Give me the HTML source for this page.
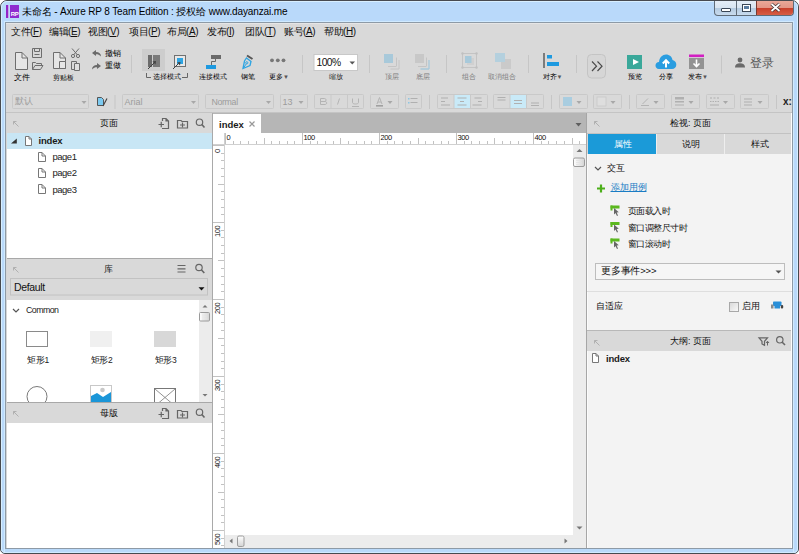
<!DOCTYPE html>
<html><head><meta charset="utf-8">
<style>
*{margin:0;padding:0;box-sizing:border-box}
html,body{width:799px;height:554px;overflow:hidden;background:#fff;font-family:"Liberation Sans",sans-serif;color:#222}
.a{position:absolute}
.t{position:absolute;white-space:nowrap;line-height:1}
svg{position:absolute;left:0;top:0;overflow:visible}
.mn{font-size:10px;top:27px;color:#111;letter-spacing:-0.45px}
.u{text-decoration:underline}
</style></head><body>
<!-- window frame -->
<div class="a" style="left:0;top:0;width:799px;height:554px;background:#b9d9fa;border:1px solid #474a4f;border-radius:7px 7px 5px 5px"></div>
<div class="a" style="left:1px;top:1px;width:797px;height:552px;border:1px solid #d8efff;border-radius:6px 6px 4px 4px"></div>
<div class="a" style="left:4px;top:21px;width:790px;height:532px;border:1px solid #d0eaff"></div>
<div class="a" style="left:5px;top:22px;width:788px;height:527px;background:#d9d9d9;border:1px solid #8d9aa6"></div>

<!-- title bar -->
<div class="a" style="left:6px;top:5px;width:2px;height:13px;background:#9424c8"></div>
<div class="a" style="left:8px;top:5px;width:1px;height:13px;background:#c9a6e6"></div>
<div class="a" style="left:10px;top:5px;width:9px;height:13px;background:#8f2bcf"></div>
<div class="t" style="left:10px;top:11px;width:9px;text-align:center;font-size:6px;font-weight:bold;color:#fff;letter-spacing:-0.5px">RP</div>
<div class="t" style="left:22px;top:6.5px;font-size:10px;color:#000;letter-spacing:-0.13px">未命名 - Axure RP 8 Team Edition : 授权给 www.dayanzai.me</div>
<!-- caption buttons -->
<div class="a" style="left:714px;top:1px;width:80px;height:15px;border:1px solid #5f6b78;border-top:none;border-radius:0 0 4px 4px;overflow:hidden;background:linear-gradient(#e4edf7 0,#d8e4f0 50%,#b4cae0 50%,#c8dbee 100%)">
  <div class="a" style="left:21px;top:0;width:1px;height:15px;background:#5f6b78"></div>
  <div class="a" style="left:41px;top:0;width:38px;height:15px;background:linear-gradient(#eaa898 0,#e29484 50%,#c9412c 50%,#d8624a 100%);border-left:1px solid #7a3a30"></div>
</div>
<div class="a" style="left:721px;top:8px;width:10px;height:4px;background:#fff;border:1px solid #3a4656;border-radius:1px"></div>
<div class="a" style="left:742px;top:4px;width:9px;height:8px;background:#fff;border:1px solid #3a4656"></div>
<div class="a" style="left:744px;top:6px;width:5px;height:3px;background:#5a7ca0"></div>
<svg width="799" height="20"><path d="M771.5 4L779.5 11M779.5 4L771.5 11" stroke="#3a3030" stroke-width="3.2"/><path d="M771.5 4L779.5 11M779.5 4L771.5 11" stroke="#fff" stroke-width="1.8"/></svg>

<!-- menu -->
<div class="a" style="left:6px;top:23px;width:786px;height:1px;background:#e6e6e6"></div>
<div class="t mn" style="left:11px">文件(<span class="u">F</span>)</div>
<div class="t mn" style="left:49px">编辑(<span class="u">E</span>)</div>
<div class="t mn" style="left:88px">视图(<span class="u">V</span>)</div>
<div class="t mn" style="left:129px">项目(<span class="u">P</span>)</div>
<div class="t mn" style="left:167px">布局(<span class="u">A</span>)</div>
<div class="t mn" style="left:207px">发布(<span class="u">I</span>)</div>
<div class="t mn" style="left:245px">团队(<span class="u">T</span>)</div>
<div class="t mn" style="left:284px">账号(<span class="u">A</span>)</div>
<div class="t mn" style="left:324px">帮助(<span class="u">H</span>)</div>


<!-- TOOLBAR -->
<svg width="799" height="90" style="top:0">
 <g fill="none" stroke="#6e6e6e" stroke-width="1">
  <!-- new file -->
  <path d="M15.5 52.5H22L27.5 58V69.5H15.5Z" fill="#e6e6e6"/>
  <path d="M22 52.5V58H27.5"/>
  <!-- save -->
  <path d="M32.5 48.5H41.5V57.5H32.5Z"/><path d="M34.5 48.5V51.5H39.5V48.5M34.5 54.5H39.5"/>
  <!-- open -->
  <path d="M32.5 69.5V62.5H35.5L36.5 63.5H41.5V65.5M32.5 69.5L35 65.5H43L40.5 69.5Z"/>
  <!-- paste -->
  <path d="M53.5 52.5H60L65.5 58V68.5H53.5Z" fill="#e6e6e6"/>
  <path d="M60 52.5V58H65.5"/>
  <path d="M59.5 61.5H65.5V68.5H59.5Z" fill="#e6e6e6"/>
  <!-- scissors -->
  <path d="M72 48.5L77.5 55M79 48.5L73.5 55"/>
  <circle cx="73" cy="56" r="1.6"/><circle cx="78" cy="56" r="1.6"/>
  <!-- copy -->
  <path d="M71.5 61.5H76.5V69.5H71.5Z"/><path d="M74.5 63.5H79.5V70.5H74.5Z" fill="#e0e0e0"/>
 </g>
 <!-- undo redo arrows -->
 <path d="M92 53L96 50V52C99 52 101 53.5 101 56.5C99.5 54.8 98 54.3 96 54.3V56Z" fill="#6a6a6a"/>
 <path d="M101 66L97 63V65C94 65 92 66.5 92 69.5C93.5 67.8 95 67.3 97 67.3V69Z" fill="#6a6a6a"/>
 <!-- separator -->
 <rect x="131" y="55" width="1" height="18" fill="#c6c6c6"/>
 <!-- select mode selected bg -->
 <rect x="142" y="49" width="23" height="22" fill="#cdcdcd"/>
 <rect x="148" y="55" width="4" height="12" fill="#6b6b6b"/>
 <rect x="153" y="55" width="7" height="12" fill="#7a7a7a"/>
 <path d="M148 69L154 63" stroke="#404040" stroke-width="1"/><path d="M152.5 61.5L156 61L155.5 64.5Z" fill="#404040"/>
 <!-- select mode 2 -->
 <rect x="174.5" y="55.5" width="11" height="11" fill="#e8e8e8" stroke="#707070"/>
 <rect x="177" y="58" width="6" height="6" fill="#2ea4e2"/>
 <path d="M173 69L178.5 63.5" stroke="#404040" stroke-width="1"/><path d="M177 62.5L180.5 62L180 65.5Z" fill="#404040"/>
 <path d="M146.5 73V77.5H151M182 77.5H187.5V73" fill="none" stroke="#666" stroke-width="1"/>
 <!-- connector -->
 <rect x="211" y="55" width="10" height="4" fill="#6a6a6a"/>
 <rect x="206" y="65" width="10" height="4" fill="#1e9ae0"/>
 <path d="M215.5 59V61.5H211.5V65" fill="none" stroke="#6a6a6a" stroke-width="1"/>
 <!-- pen -->
 <path d="M246.5 58L251 61.5L250 65.5L243 68.5L244.5 61Z" fill="none" stroke="#2ea4e2" stroke-width="1.3"/>
 <circle cx="246.8" cy="62.8" r="1.1" fill="none" stroke="#2ea4e2" stroke-width="1"/>
 <path d="M243.5 68L246.3 63.8" stroke="#2ea4e2" stroke-width="1"/>
 <path d="M247 55.5L252.5 59" stroke="#555" stroke-width="2"/>
 <!-- dots -->
 <circle cx="272" cy="60.3" r="1.9" fill="#777"/><circle cx="277.8" cy="60.3" r="1.9" fill="#777"/><circle cx="283.5" cy="60.3" r="1.9" fill="#777"/>
 <!-- separator -->
 <rect x="302" y="55" width="1" height="18" fill="#c6c6c6"/>
 <!-- zoom box -->
 <rect x="314" y="54.5" width="43.5" height="16" fill="#fff" stroke="#c8c8c8"/>
 <path d="M349.5 61.5H355L352.25 64.5Z" fill="#555"/>
 <rect x="369" y="55" width="1" height="18" fill="#c6c6c6"/>
 <!-- to front -->
 <path d="M396.5 57.5V66M388 66.5H396.5M399 60V69M390.5 69H399" stroke="#c4c4c4" stroke-width="1" fill="none"/>
 <rect x="384" y="54" width="9" height="9" fill="#a8c9da"/>
 <!-- to back -->
 <path d="M426.5 57.5V66M418 66.5H426.5" stroke="#c4c4c4" stroke-width="1" fill="none"/>
 <rect x="415" y="54" width="9" height="9" fill="#c8c8c8"/>
 <path d="M429 60V69M420.5 69H429" stroke="#a8c9da" stroke-width="1.3" fill="none"/>
 <rect x="446" y="55" width="1" height="18" fill="#c6c6c6"/>
 <!-- group -->
 <rect x="462.5" y="53.5" width="14" height="14" fill="none" stroke="#c4c4c4"/>
 <rect x="467" y="58" width="7" height="7" fill="#d0d0d0"/>
 <rect x="465" y="56" width="6.5" height="7" fill="#a8c9da"/>
 <circle cx="462.5" cy="53.5" r="1.2" fill="#c0c0c0"/><circle cx="476.5" cy="53.5" r="1.2" fill="#c0c0c0"/><circle cx="462.5" cy="67.5" r="1.2" fill="#c0c0c0"/><circle cx="476.5" cy="67.5" r="1.2" fill="#c0c0c0"/>
 <!-- ungroup -->
 <rect x="501" y="59" width="10" height="10" fill="#cacaca"/>
 <rect x="495" y="53" width="10" height="9" fill="#b4d0de"/>
 <rect x="528" y="55" width="1" height="18" fill="#c6c6c6"/>
 <!-- align -->
 <rect x="543" y="53" width="2" height="15" fill="#7c7c7c"/>
 <rect x="547" y="55" width="5" height="3.5" fill="#1e9ae0"/>
 <rect x="547" y="62" width="12" height="4" fill="#1e9ae0"/>
 <rect x="576" y="55" width="1" height="18" fill="#c6c6c6"/>
 <!-- >> -->
 <rect x="587.5" y="54.5" width="18" height="23.5" rx="4" fill="#d6d6d6" stroke="#c4c4c4"/>
 <path d="M592 61.5L596.5 66.2L592 71M597.5 61.5L602 66.2L597.5 71" fill="none" stroke="#4a4a4a" stroke-width="1.2"/>
 <!-- preview -->
 <rect x="627" y="55" width="15" height="14" fill="#3aa89a"/>
 <path d="M633 59L639 62L633 65Z" fill="#fff"/>
 <!-- share cloud -->
 <path d="M659 69C656.5 69 655.5 67 655.5 65.5C655.5 63.5 657 62 659 62C659.5 57.5 662.5 54.6 666 54.6C669.5 54.6 672 57 672.5 60C675 60.5 676.3 62.5 676.3 64.7C676.3 67 674.5 69 672 69Z" fill="#2a9de0"/>
 <path d="M666 67.5V60.5M662.8 63.5L666 60.2L669.2 63.5" fill="none" stroke="#fff" stroke-width="2"/>
 <!-- publish -->
 <rect x="689" y="54.5" width="15" height="2.6" fill="#d21fc2"/>
 <rect x="689" y="58" width="15" height="11" fill="#939393"/>
 <path d="M696.5 59.5V66.5M693.5 63.5L696.5 66.5L699.5 63.5" fill="none" stroke="#fff" stroke-width="1.6"/>
 <rect x="721" y="55.5" width="1" height="18" fill="#c6c6c6"/>
 <!-- user -->
 <circle cx="740" cy="60" r="2.4" fill="#6a6a6a"/>
 <path d="M735 67.5C735 64.5 737 63.3 740 63.3C743 63.3 745 64.5 745 67.5Z" fill="#6a6a6a"/>
</svg>
<div class="t" style="left:13.5px;top:73.5px;font-size:7.5px;color:#000">文件</div>
<div class="t" style="left:52.5px;top:73.5px;font-size:7px;color:#000">剪贴板</div>
<div class="t" style="left:104.5px;top:50px;font-size:7.5px;color:#000">撤销</div>
<div class="t" style="left:104.5px;top:62px;font-size:7.5px;color:#000">重做</div>
<div class="t" style="left:153px;top:72.5px;font-size:7px;color:#000">选择模式</div>
<div class="t" style="left:199px;top:72.5px;font-size:7px;color:#000">连接模式</div>
<div class="t" style="left:240.5px;top:72.5px;font-size:7px;color:#000">钢笔</div>
<div class="t" style="left:269px;top:72.5px;font-size:7px;color:#000">更多<span style="font-size:6px;color:#555">▼</span></div>
<div class="t" style="left:316.5px;top:58px;font-size:10.3px;color:#111;letter-spacing:-0.6px">100%</div>
<div class="t" style="left:329px;top:72.5px;font-size:7px;color:#222">缩放</div>
<div class="t" style="left:385px;top:72.5px;font-size:7px;color:#7a7a7a">顶层</div>
<div class="t" style="left:416px;top:72.5px;font-size:7px;color:#7a7a7a">底层</div>
<div class="t" style="left:462px;top:72.5px;font-size:7px;color:#7a7a7a">组合</div>
<div class="t" style="left:488px;top:72.5px;font-size:7px;color:#7a7a7a">取消组合</div>
<div class="t" style="left:542.5px;top:72.5px;font-size:7px;color:#000">对齐<span style="font-size:6px;color:#555">▼</span></div>
<div class="t" style="left:628px;top:72.5px;font-size:7px;color:#000">预览</div>
<div class="t" style="left:659px;top:72.5px;font-size:7px;color:#000">分享</div>
<div class="t" style="left:688px;top:72.5px;font-size:7px;color:#000">发布<span style="font-size:6px;color:#555">▼</span></div>
<div class="t" style="left:749.5px;top:56.5px;font-size:12px;color:#555">登录</div>


<!-- FORMAT BAR -->
<svg width="799" height="120" style="top:0">
 <g fill="none" stroke="#c9c9c9" stroke-width="1">
  <rect x="12.5" y="94.5" width="76" height="14" rx="1"/>
  <rect x="122.5" y="94.5" width="76" height="14" rx="1"/>
  <rect x="205.5" y="94.5" width="68" height="14" rx="1"/>
  <rect x="280.5" y="94.5" width="27" height="14" rx="1"/>
  <rect x="314.5" y="94.5" width="49" height="14" rx="1"/>
  <path d="M331 95V108M347.5 95V108"/>
  <rect x="370.5" y="94.5" width="28" height="14" rx="1"/>
  <rect x="405.5" y="94.5" width="16" height="14" rx="1"/>
  <rect x="437.5" y="94.5" width="50" height="14" rx="1"/>
  <rect x="493.5" y="94.5" width="50" height="14" rx="1"/>
  <rect x="559.5" y="94.5" width="28" height="14" rx="1"/>
  <rect x="593.5" y="94.5" width="28" height="14" rx="1"/>
  <rect x="636.5" y="94.5" width="28" height="14" rx="1"/>
  <rect x="671.5" y="94.5" width="28" height="14" rx="1"/>
  <rect x="706.5" y="94.5" width="28" height="14" rx="1"/>
  <rect x="740.5" y="94.5" width="28" height="14" rx="1"/>
 </g>
 <rect x="454" y="95" width="16.5" height="13" fill="#c9eaf8"/>
 <rect x="510" y="95" width="16.5" height="13" fill="#c9eaf8"/>
 <path d="M454 95V108M470.5 95V108M510 95V108M526.5 95V108" stroke="#c9c9c9" stroke-width="1"/>
 <!-- separators -->
 <rect x="114.5" y="95" width="1" height="14" fill="#c6c6c6"/>
 <rect x="429" y="95" width="1" height="14" fill="#c6c6c6"/>
 <rect x="551" y="95" width="1" height="14" fill="#c6c6c6"/>
 <rect x="629" y="95" width="1" height="14" fill="#c6c6c6"/>
 <rect x="776" y="95" width="1" height="14" fill="#c6c6c6"/>
 <!-- arrows -->
 <g fill="#a8a8a8">
  <path d="M81.5 101H86.5L84 104Z"/>
  <path d="M191 101H196L193.5 104Z"/>
  <path d="M266 101H271L268.5 104Z"/>
  <path d="M298.5 101H303.5L301 104Z"/>
  <path d="M387.5 101H392.5L390 104Z"/>
  <path d="M576.5 101H581.5L579 104Z"/>
  <path d="M610.5 101H615.5L613 104Z"/>
  <path d="M653.5 101H658.5L656 104Z"/>
  <path d="M688.5 101H693.5L691 104Z"/>
  <path d="M723 101H728L725.5 104Z"/>
  <path d="M757.5 101H762.5L760 104Z"/>
 </g>
 <!-- format painter -->
 <path d="M97.5 97.5H101.5L103.5 99.5V105.5H97.5Z" fill="#7ccaf0" stroke="#555" stroke-width="1"/>
 <path d="M103 106L107 98.5" stroke="#444" stroke-width="1.2"/>
 <!-- B I U -->
 <g fill="none" stroke="#b4b4b4" stroke-width="1">
  <path d="M320.5 98.5H324.5C326.5 98.5 326.5 101.5 324.5 101.5H320.5M320.5 101.5H325C327.2 101.5 327.2 104.5 325 104.5H320.5V98.5"/>
  <path d="M339.5 98.5L337.5 104.5"/>
  <path d="M352.5 98.5V102.5C352.5 104.5 358.5 104.5 358.5 102.5V98.5M352 106.5H359"/>
  <path d="M377 104L379.5 97.5L382 104M378 102H381"/>
 </g>
 <rect x="376" y="105" width="7" height="1.6" fill="#a0a0a0"/>
 <!-- list -->
 <g fill="#b0b0b0">
  <rect x="408" y="98" width="1.5" height="1.5" fill="#8cc6e4"/><rect x="410.5" y="98" width="7" height="1"/>
  <rect x="408" y="102" width="1.5" height="1.5" fill="#8cc6e4"/><rect x="410.5" y="102" width="7" height="1"/>
 </g>
 <!-- align h -->
 <g fill="#b0b0b0">
  <rect x="441" y="97.5" width="7" height="1"/><rect x="441" y="101" width="4" height="1"/><rect x="441" y="104.5" width="9" height="1"/>
  <rect x="457.5" y="97.5" width="9" height="1"/><rect x="460" y="101" width="4" height="1"/><rect x="457.5" y="104.5" width="9" height="1"/>
  <rect x="474.5" y="97.5" width="7" height="1"/><rect x="478" y="101" width="4" height="1"/><rect x="472.5" y="104.5" width="9" height="1"/>
  <rect x="497.5" y="97" width="8" height="1"/><rect x="497.5" y="99.5" width="8" height="1"/>
  <rect x="514" y="100" width="8" height="1"/><rect x="514" y="103" width="8" height="1"/>
  <rect x="531" y="102.5" width="8" height="1"/><rect x="531" y="105" width="8" height="1"/>
 </g>
 <!-- fill color -->
 <rect x="563" y="97" width="9" height="9" fill="#a9cde0"/>
 <rect x="597" y="97" width="9" height="9" fill="#dedede" stroke="#c8c8c8" stroke-width="0.8"/>
 <path d="M641 105.5H649M642.5 104L648 98.5" stroke="#b4b4b4" stroke-width="1"/>
 <g fill="#b0b0b0">
  <rect x="675" y="97" width="9" height="2.5"/><rect x="675" y="101" width="9" height="1.5"/><rect x="675" y="104.5" width="9" height="1"/>
  <rect x="710" y="97.5" width="2" height="1"/><rect x="713.5" y="97.5" width="2" height="1"/><rect x="717" y="97.5" width="2" height="1"/>
  <rect x="710" y="101" width="1.5" height="1"/><rect x="712.5" y="101" width="1.5" height="1"/><rect x="715" y="101" width="1.5" height="1"/><rect x="717.5" y="101" width="1.5" height="1"/>
  <rect x="710" y="104.5" width="9" height="1"/>
  <path d="M744 98.5H752V99.5H744ZM744 101.5H752V102.5H744ZM744 104.5H752V105.5H744Z"/>
 </g>
</svg>
<div class="t" style="left:15px;top:97px;font-size:8.6px;color:#999">默认</div>
<div class="t" style="left:124.5px;top:97.5px;font-size:9px;color:#9c9c9c">Arial</div>
<div class="t" style="left:211.5px;top:97.5px;font-size:8.8px;color:#9c9c9c;letter-spacing:-0.35px">Normal</div>
<div class="t" style="left:282.5px;top:97.5px;font-size:9px;color:#9c9c9c">13</div>
<div class="t" style="left:783px;top:97px;font-size:10px;font-weight:bold;color:#222">x:</div>

<!-- format bar bottom line -->
<div class="a" style="left:6px;top:112px;width:786px;height:1px;background:#c4c4c4"></div>

<!-- LEFT PANEL -->
<div class="a" style="left:6px;top:113px;width:206px;height:20px;background:#d9d9d9"></div>
<div class="a" style="left:6px;top:133px;width:206px;height:125px;background:#fff"></div>
<div class="a" style="left:6px;top:133px;width:206px;height:16px;background:#c8e6f5"></div>
<div class="a" style="left:6px;top:258px;width:206px;height:1px;background:#a8a8a8"></div>
<div class="a" style="left:6px;top:259px;width:206px;height:41px;background:#d9d9d9"></div>
<div class="a" style="left:6px;top:300px;width:193px;height:102px;background:#fff"></div>
<div class="a" style="left:199px;top:300px;width:13px;height:102px;background:#ececec"></div>
<div class="a" style="left:6px;top:402px;width:206px;height:1px;background:#a8a8a8"></div>
<div class="a" style="left:6px;top:403px;width:206px;height:20px;background:#d9d9d9"></div>
<div class="a" style="left:6px;top:423px;width:206px;height:125px;background:#fff"></div>
<div class="a" style="left:212px;top:113px;width:1px;height:435px;background:#a9a9a9"></div>
<div class="a" style="left:6px;top:113px;width:1px;height:435px;background:#d6d6d6"></div>

<!-- CANVAS -->
<div class="a" style="left:213px;top:113px;width:373px;height:20px;background:#b6b6b6"></div>
<div class="a" style="left:213px;top:114px;width:48px;height:19px;background:#fff"></div>
<div class="a" style="left:213px;top:133px;width:373px;height:12px;background:#fff"></div>
<div class="a" style="left:213px;top:145px;width:12px;height:403px;background:#fff"></div>
<div class="a" style="left:225px;top:145px;width:348px;height:390px;background:#fff"></div>
<div class="a" style="left:573px;top:145px;width:13px;height:390px;background:#ececec"></div>
<div class="a" style="left:225px;top:535px;width:361px;height:13px;background:#ececec"></div>
<div class="a" style="left:586px;top:113px;width:1px;height:435px;background:#a6a6a6"></div>

<!-- RIGHT PANEL -->
<div class="a" style="left:587px;top:113px;width:205px;height:20px;background:#d9d9d9"></div>
<div class="a" style="left:587px;top:133px;width:205px;height:1px;background:#c2c2c2"></div>
<div class="a" style="left:587px;top:134px;width:205px;height:20px;background:#d9d9d9"></div>
<div class="a" style="left:588px;top:134px;width:68px;height:20px;background:#1b9ad8"></div>
<div class="a" style="left:724px;top:134px;width:1px;height:20px;background:#eeeeee"></div>
<div class="a" style="left:656px;top:134px;width:1px;height:20px;background:#eeeeee"></div>
<div class="a" style="left:587px;top:154px;width:205px;height:176px;background:#f3f3f3;border-left:1px solid #fbfbfb"></div>
<div class="a" style="left:587px;top:330px;width:205px;height:1px;background:#b8b8b8"></div>
<div class="a" style="left:587px;top:331px;width:205px;height:20px;background:#d9d9d9"></div>
<div class="a" style="left:587px;top:351px;width:205px;height:197px;background:#f3f3f3;border-left:1px solid #fbfbfb"></div>
<div class="a" style="left:791px;top:113px;width:1px;height:435px;background:#fdfdfd"></div>

<!-- PANEL CONTENT -->
<svg width="799" height="554" style="top:0">
 <!-- collapse icons -->
 <g stroke="#b0b0b0" stroke-width="1" fill="none">
  <path d="M18.5 126.5L13.5 121.5M13.5 124.5V121.5H16.5"/>
  <path d="M18.5 272.5L13.5 267.5M13.5 270.5V267.5H16.5"/>
  <path d="M18.5 416.5L13.5 411.5M13.5 414.5V411.5H16.5"/>
  <path d="M599.5 126.5L594.5 121.5M594.5 124.5V121.5H597.5"/>
  <path d="M599.5 345.5L594.5 340.5M594.5 343.5V340.5H597.5"/>
 </g>
 <!-- pages header icons -->
 <g stroke="#666" stroke-width="1.2" fill="none">
  <path d="M162.5 121V118.5H166L168.5 121V128.5H162M166 118.5V121H168.5"/>
  <path d="M158.5 124.5H164M161.25 121.75V127.25"/>
  <path d="M177.5 120.5H181L182 121.5H187.5V128H177.5Z"/>
  <path d="M180 125H185M182.5 122.5V127.5"/>
  <circle cx="199.5" cy="122.2" r="3.2"/><path d="M201.8 124.5L204.5 127.5" stroke-width="1.6"/>
 </g>
 <g stroke="#666" stroke-width="1.2" fill="none">
  <path d="M162.5 411V408.5H166L168.5 411V418.5H162M166 408.5V411H168.5"/>
  <path d="M158.5 414.5H164M161.25 411.75V417.25"/>
  <path d="M177.5 410.5H181L182 411.5H187.5V418H177.5Z"/>
  <path d="M180 415H185M182.5 412.5V417.5"/>
  <circle cx="199.5" cy="412.2" r="3.2"/><path d="M201.8 414.5L204.5 417.5" stroke-width="1.6"/>
 </g>
 <!-- library header icons -->
 <path d="M177.5 265.5H185.5M177.5 268.8H185.5M177.5 272H185.5" stroke="#666" stroke-width="1.2"/>
 <g stroke="#666" stroke-width="1.2" fill="none"><circle cx="199" cy="267.5" r="3.2"/><path d="M201.3 269.8L204.3 273" stroke-width="1.6"/></g>
 <!-- library dropdown -->
 <rect x="10.5" y="278.5" width="197" height="16.5" fill="#d9d9d9" stroke="#c2c2c2"/>
 <path d="M198.5 287.3H204.5L201.5 290.5Z" fill="#111"/>
 <!-- tree -->
 <path d="M11 143.6H16.8V138.6Z" fill="#333"/>
 <g stroke="#777" stroke-width="1" fill="#fff">
  <path d="M25.5 136.5H29L31.5 139V145.5H25.5Z"/>
  <path d="M38.5 152.5H42L45.5 156V161.5H38.5Z"/>
  <path d="M38.5 168.5H42L45.5 172V177.5H38.5Z"/>
  <path d="M38.5 184.5H42L45.5 188V193.5H38.5Z"/>
  <path d="M592.5 353.5H596L598.5 356V362.5H592.5Z"/>
 </g>
 <path d="M29 136.5V139H31.5M42 152.5V156H45.5M42 168.5V172H45.5M42 184.5V188H45.5M596 353.5V356H598.5" stroke="#777" stroke-width="1" fill="none"/>
 <!-- library items -->
 <defs><clipPath id="libclip"><rect x="6" y="300" width="193" height="102"/></clipPath></defs>
 <g clip-path="url(#libclip)">
 <path d="M13 309L16 312L19 309" stroke="#555" stroke-width="1.2" fill="none"/>
 <rect x="26.5" y="331.5" width="21" height="15" fill="#fff" stroke="#8a8a8a"/>
 <rect x="90" y="331" width="22" height="16" fill="#f0f0f0"/>
 <rect x="154" y="331" width="22" height="16" fill="#d8d8d8"/>
 <circle cx="37" cy="396.5" r="10" fill="#fff" stroke="#7a7a7a"/>
 <rect x="90.5" y="385.5" width="21" height="20" fill="#fff" stroke="#c8c8c8"/>
 <circle cx="102.5" cy="390" r="2.3" fill="#c8c8c8"/>
 <path d="M91 396L97 393L103 397L111 392V403H91Z" fill="#1b96d8"/>
 <rect x="154.5" y="388.5" width="21" height="18" fill="#fff" stroke="#777"/>
 <path d="M155 389L175 406M175 389L155 406" stroke="#777" stroke-width="0.8"/>
 </g>
 <!-- library scrollbar -->
 <path d="M202.5 307.5H207.5L205 305Z" fill="#777"/>
 <rect x="199.5" y="312.5" width="10" height="8.5" rx="1" fill="url(#thv)" stroke="#9a9a9a"/><path d="M202 315H207M202 317H207M202 319H207" stroke="#e2e2e2" stroke-width="0.8"/>
 <path d="M202.5 394H207.5L205 396.5Z" fill="#777"/>
 <!-- canvas tab -->
 <path d="M249.5 121.5L254.5 126.5M254.5 121.5L249.5 126.5" stroke="#999" stroke-width="1.2"/>
 <path d="M575.5 123H581.5L578.5 126.5Z" fill="#5f5f5f"/>
 <!-- rulers -->
 <path d="M225.5 133V144M233.5 141V144M240.5 141V144M248.5 141V144M256.5 141V144M264.5 138V144M271.5 141V144M279.5 141V144M287.5 141V144M294.5 141V144M302.5 133V144M310.5 141V144M317.5 141V144M325.5 141V144M333.5 141V144M340.5 138V144M348.5 141V144M356.5 141V144M364.5 141V144M371.5 141V144M379.5 133V144M387.5 141V144M394.5 141V144M402.5 141V144M410.5 141V144M418.5 138V144M425.5 141V144M433.5 141V144M441.5 141V144M448.5 141V144M456.5 133V144M464.5 141V144M471.5 141V144M479.5 141V144M487.5 141V144M494.5 138V144M502.5 141V144M510.5 141V144M518.5 141V144M525.5 141V144M533.5 133V144M541.5 141V144M548.5 141V144M556.5 141V144M564.5 141V144M572.5 138V144M579.5 141V144" stroke="#c2c2c2" stroke-width="1"/>
 <path d="M213 145.5H224M221 153.5H224M221 160.5H224M221 168.5H224M221 176.5H224M218 184.5H224M221 191.5H224M221 199.5H224M221 207.5H224M221 214.5H224M213 222.5H224M221 230.5H224M221 237.5H224M221 245.5H224M221 253.5H224M218 260.5H224M221 268.5H224M221 276.5H224M221 284.5H224M221 291.5H224M213 299.5H224M221 307.5H224M221 314.5H224M221 322.5H224M221 330.5H224M218 338.5H224M221 345.5H224M221 353.5H224M221 361.5H224M221 368.5H224M213 376.5H224M221 384.5H224M221 391.5H224M221 399.5H224M221 407.5H224M218 414.5H224M221 422.5H224M221 430.5H224M221 438.5H224M221 445.5H224M213 453.5H224M221 461.5H224M221 468.5H224M221 476.5H224M221 484.5H224M218 492.5H224M221 499.5H224M221 507.5H224M221 515.5H224M221 522.5H224M213 530.5H224M221 538.5H224M221 545.5H224" stroke="#c2c2c2" stroke-width="1"/>
 <rect x="213" y="144" width="373" height="1" fill="#d0d0d0"/>
 <rect x="224" y="133" width="1" height="415" fill="#d0d0d0"/>
 <!-- canvas scrollbars -->
 <path d="M576.5 152H582.5L579.5 149Z" fill="#777"/>
 <defs><linearGradient id="thv" x1="0" x2="1"><stop offset="0" stop-color="#fff"/><stop offset="1" stop-color="#d4d4d4"/></linearGradient><linearGradient id="thh" x1="0" y1="0" x2="0" y2="1"><stop offset="0" stop-color="#fff"/><stop offset="1" stop-color="#d4d4d4"/></linearGradient></defs><rect x="573.5" y="158" width="11" height="8.5" rx="1.5" fill="url(#thv)" stroke="#9c9c9c"/><path d="M576 160.5H582M576 162.5H582M576 164.5H582" stroke="#e2e2e2" stroke-width="0.8"/>
 <path d="M576.5 526.5H582.5L579.5 529.5Z" fill="#777"/>
 <path d="M232.5 538.5V543.5L229.5 541Z" fill="#777"/>
 <rect x="237.5" y="536" width="6.5" height="10.5" rx="1.5" fill="url(#thh)" stroke="#9c9c9c"/>
 <path d="M564.5 538.5V543.5L567.5 541Z" fill="#777"/>
 <!-- right panel -->
 <path d="M595 167L598 170L601 167" stroke="#555" stroke-width="1.2" fill="none"/>
 <path d="M597 188.5H605M601 184.5V192.5" stroke="#4caf1a" stroke-width="2.2"/>
 <g>
  <rect x="610.5" y="205.5" width="9" height="3" fill="#5bb81e"/><rect x="610.5" y="205.5" width="2" height="5" fill="#5bb81e"/>
  <path d="M614 208V214.5L615.5 213L617 216L618 215.5L616.7 212.5L618.8 212.3Z" fill="#666"/>
  <rect x="610.5" y="222" width="9" height="3" fill="#5bb81e"/><rect x="610.5" y="222" width="2" height="5" fill="#5bb81e"/>
  <path d="M614 224.5V231L615.5 229.5L617 232.5L618 232L616.7 229L618.8 228.8Z" fill="#666"/>
  <rect x="610.5" y="238.5" width="9" height="3" fill="#5bb81e"/><rect x="610.5" y="238.5" width="2" height="5" fill="#5bb81e"/>
  <path d="M614 241V247.5L615.5 246L617 249L618 248.5L616.7 245.5L618.8 245.3Z" fill="#666"/>
 </g>
 <rect x="595.5" y="263.5" width="189" height="16" fill="#f6f6f6" stroke="#bdbdbd"/>
 <path d="M775.5 270.5H781.5L778.5 273.5Z" fill="#555"/>
 <rect x="587" y="291" width="205" height="1" fill="#dedede"/>
 <defs><linearGradient id="cbg" x1="0" y1="0" x2="1" y2="1"><stop offset="0" stop-color="#d8d8d8"/><stop offset="1" stop-color="#fafafa"/></linearGradient></defs><rect x="729.5" y="302.5" width="9" height="9" fill="url(#cbg)" stroke="#a8a8a8"/>
 <rect x="773" y="301.5" width="8.5" height="4.5" rx="0.8" fill="#2a8fd8"/>
 <rect x="774.5" y="306" width="5.5" height="2.5" fill="#2a8fd8"/>
 <rect x="771" y="304.5" width="2.5" height="4" fill="#8a8a8a"/>
 <rect x="780.8" y="305" width="2.4" height="3.5" rx="1" fill="#444"/>
 <g stroke="#666" stroke-width="1.2" fill="none">
  <path d="M759 337.8H767.5L764.5 341.3V345.3L762 344V341.3Z"/><path d="M767.5 345.5V341.5M766 343L767.5 341.2L769 343" stroke-width="1"/>
  <circle cx="779.8" cy="339.8" r="3.2"/><path d="M782 342L785 345" stroke-width="1.6"/>
 </g>
</svg>
<div class="t" style="left:100px;top:118.5px;font-size:8.5px;color:#111">页面</div>
<div class="t" style="left:38.5px;top:136px;font-size:9.5px;font-weight:bold;color:#1a1a1a;letter-spacing:-0.2px">index</div>
<div class="t" style="left:52.5px;top:152.0px;font-size:9.5px;color:#222;letter-spacing:-0.5px">page1</div>
<div class="t" style="left:52.5px;top:168.0px;font-size:9.5px;color:#222;letter-spacing:-0.5px">page2</div>
<div class="t" style="left:52.5px;top:184.5px;font-size:9.5px;color:#222;letter-spacing:-0.5px">page3</div>
<div class="t" style="left:103.5px;top:264.5px;font-size:8.8px;color:#222">库</div>
<div class="t" style="left:14px;top:282px;font-size:10.5px;color:#111;letter-spacing:-0.35px">Default</div>
<div class="t" style="left:26px;top:306px;font-size:8.8px;color:#222;letter-spacing:-0.55px">Common</div>
<div class="t" style="left:27px;top:356px;font-size:8.5px;color:#222;letter-spacing:-0.3px">矩形1</div>
<div class="t" style="left:90.5px;top:356px;font-size:8.5px;color:#222;letter-spacing:-0.3px">矩形2</div>
<div class="t" style="left:154.5px;top:356px;font-size:8.5px;color:#222;letter-spacing:-0.3px">矩形3</div>
<div class="t" style="left:100px;top:408.5px;font-size:8.5px;color:#111">母版</div>
<div class="t" style="left:219px;top:119.5px;font-size:9.5px;font-weight:bold;color:#1a1a1a">index</div>
<div class="t" style="left:226.5px;top:134px;font-size:7.5px;color:#111;letter-spacing:-0.4px">0</div>
<div class="t" style="left:303.5px;top:134px;font-size:7.5px;color:#111;letter-spacing:-0.4px">100</div>
<div class="t" style="left:380.5px;top:134px;font-size:7.5px;color:#111;letter-spacing:-0.4px">200</div>
<div class="t" style="left:457.5px;top:134px;font-size:7.5px;color:#111;letter-spacing:-0.4px">300</div>
<div class="t" style="left:534.5px;top:134px;font-size:7.5px;color:#111;letter-spacing:-0.4px">400</div>
<div class="t" style="left:213.5px;top:153px;font-size:7.5px;line-height:7px;color:#111;letter-spacing:-0.4px;transform:rotate(-90deg);transform-origin:0 0">0</div>
<div class="t" style="left:213.5px;top:236.5px;font-size:7.5px;line-height:7px;color:#111;letter-spacing:-0.4px;transform:rotate(-90deg);transform-origin:0 0">100</div>
<div class="t" style="left:213.5px;top:313.5px;font-size:7.5px;line-height:7px;color:#111;letter-spacing:-0.4px;transform:rotate(-90deg);transform-origin:0 0">200</div>
<div class="t" style="left:213.5px;top:390.5px;font-size:7.5px;line-height:7px;color:#111;letter-spacing:-0.4px;transform:rotate(-90deg);transform-origin:0 0">300</div>
<div class="t" style="left:213.5px;top:467.5px;font-size:7.5px;line-height:7px;color:#111;letter-spacing:-0.4px;transform:rotate(-90deg);transform-origin:0 0">400</div>
<div class="t" style="left:213.5px;top:544.5px;font-size:7.5px;line-height:7px;color:#111;letter-spacing:-0.4px;transform:rotate(-90deg);transform-origin:0 0">500</div>
<div class="t" style="left:670px;top:118.5px;font-size:8.5px;color:#111">检视: 页面</div>
<div class="t" style="left:614px;top:139.5px;font-size:8.5px;color:#fff">属性</div>
<div class="t" style="left:682px;top:139.5px;font-size:8.5px;color:#111">说明</div>
<div class="t" style="left:751px;top:139.5px;font-size:8.5px;color:#111">样式</div>
<div class="t" style="left:606.5px;top:163.5px;font-size:8.5px;color:#111">交互</div>
<div class="t" style="left:610.5px;top:183px;font-size:9.3px;color:#1a7cc4;text-decoration:underline">添加用例</div>
<div class="t" style="left:627.5px;top:207px;font-size:8.5px;color:#111;letter-spacing:-0.45px">页面载入时</div>
<div class="t" style="left:627.5px;top:223.5px;font-size:8.5px;color:#111;letter-spacing:-0.45px">窗口调整尺寸时</div>
<div class="t" style="left:627.5px;top:240px;font-size:8.5px;color:#111;letter-spacing:-0.45px">窗口滚动时</div>
<div class="t" style="left:601px;top:266px;font-size:9.5px;color:#111;letter-spacing:-0.2px">更多事件&gt;&gt;&gt;</div>
<div class="t" style="left:596px;top:301.5px;font-size:8.5px;color:#111">自适应</div>
<div class="t" style="left:742px;top:302px;font-size:8.5px;color:#111">启用</div>
<div class="t" style="left:670px;top:336.5px;font-size:8.5px;color:#111">大纲: 页面</div>
<div class="t" style="left:606px;top:354px;font-size:9.5px;font-weight:bold;color:#1a1a1a;letter-spacing:-0.2px">index</div>

</body></html>
